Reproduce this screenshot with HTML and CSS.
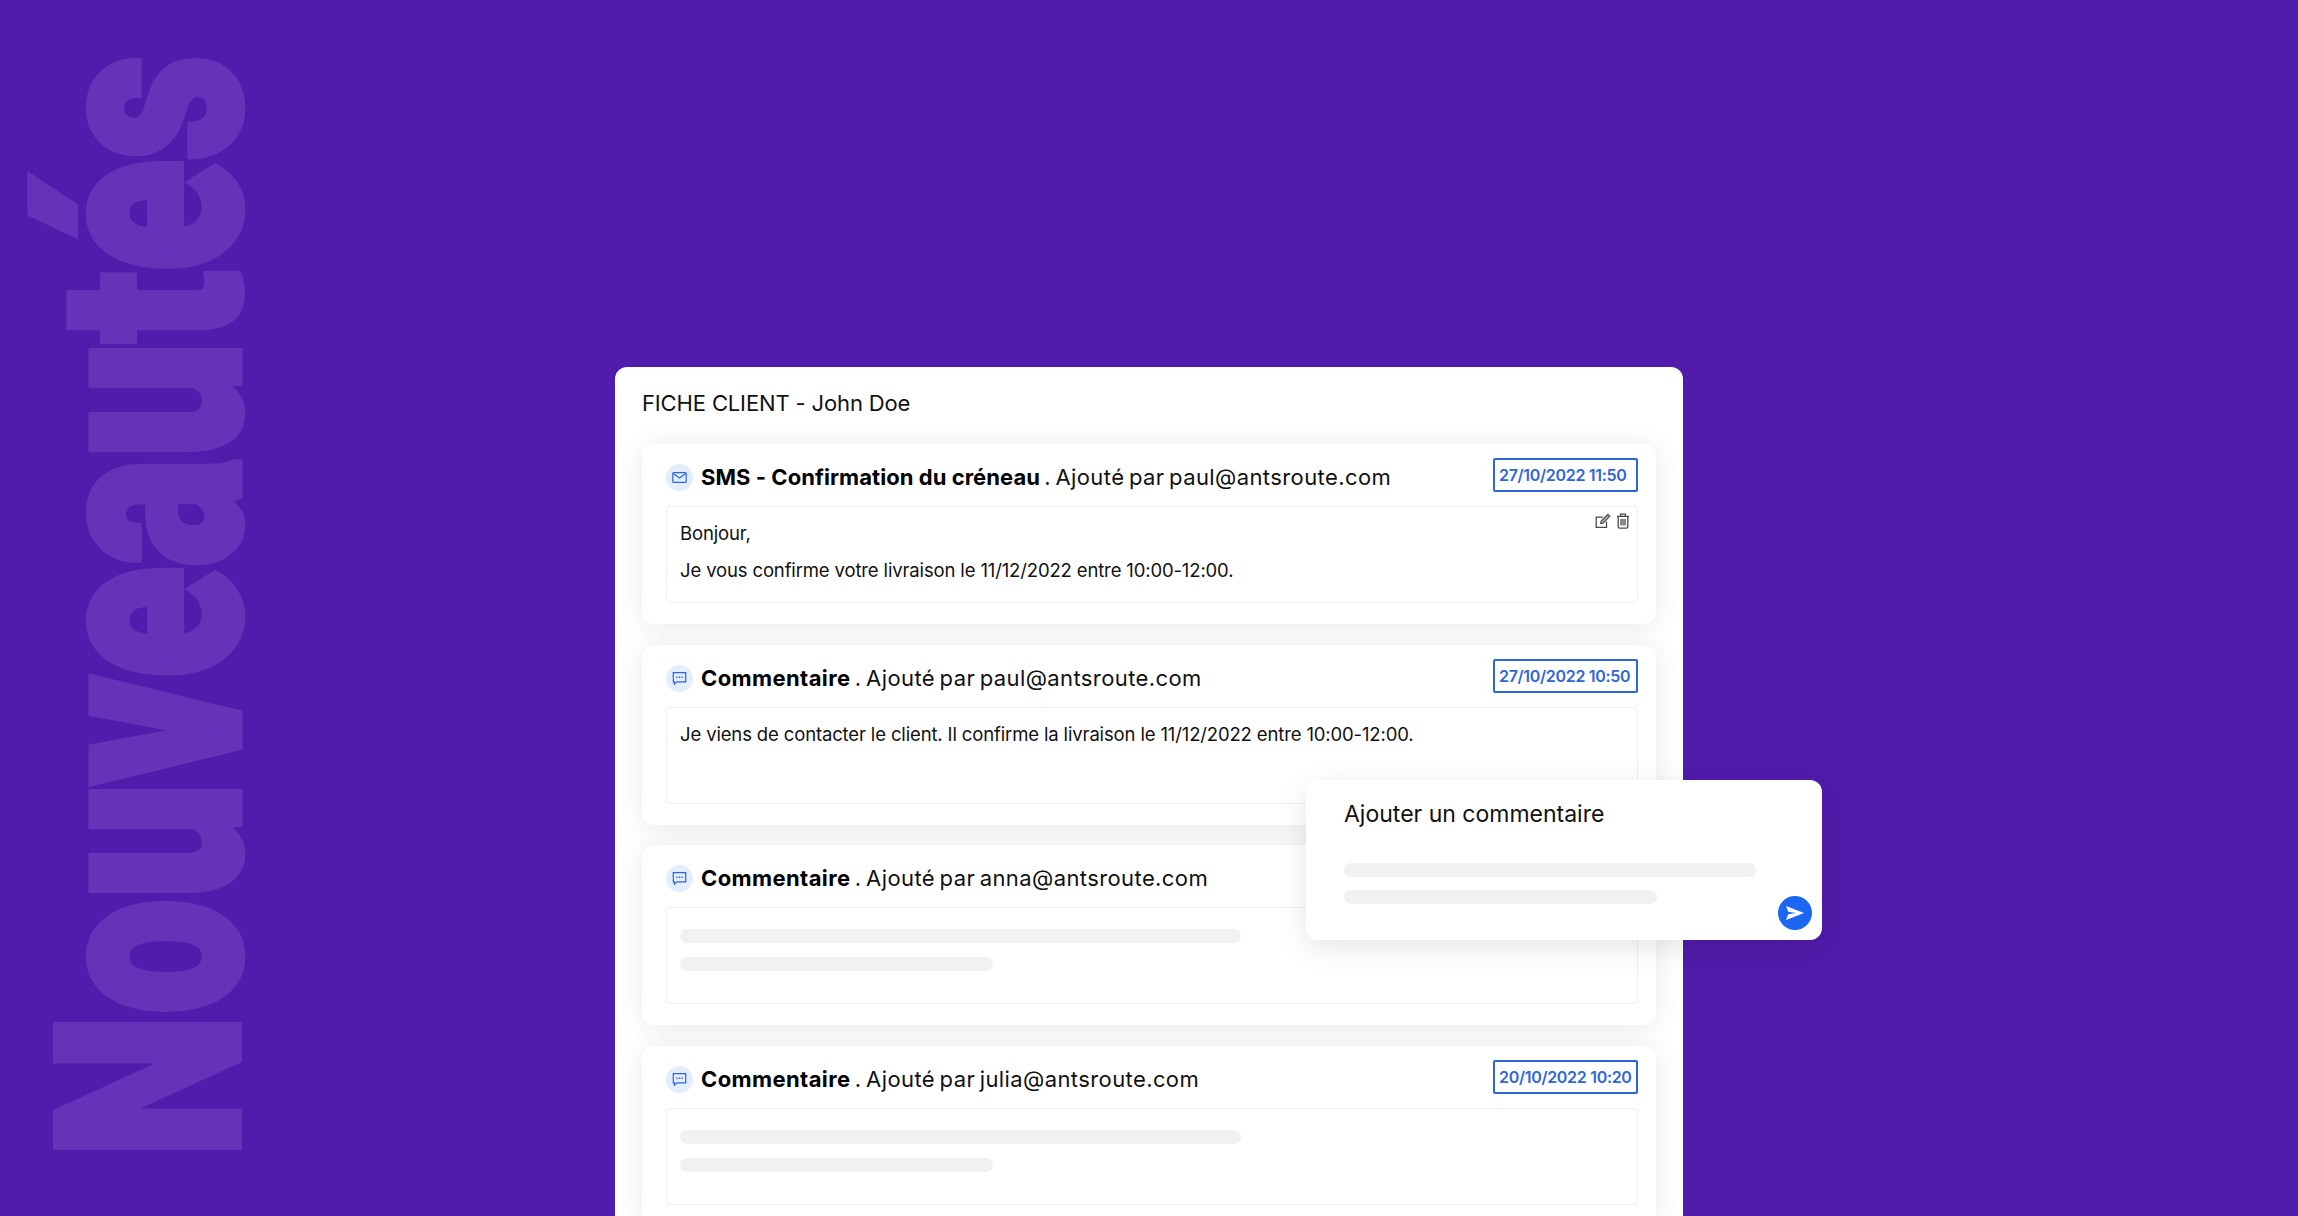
FILE: index.html
```html
<!DOCTYPE html>
<html lang="fr">
<head>
<meta charset="utf-8">
<title>Nouveautés</title>
<link rel="stylesheet" href="styles.css">
</head>
<body>
<div class="stage">
  <div class="watermark">N<span class="wm-low">ouveau</span>t<span class="wm-low">és</span></div>
  <section class="sheet">
    <h1 class="sheet-title">FICHE CLIENT - John Doe</h1>
    <div class="entries">
      <article class="entry">
        <header class="entry-head">
          <div class="lead">
            <span class="badge"><svg width="15" height="13" viewBox="0 0 15 13" fill="none" stroke="#2f66d6" stroke-width="1.2"><rect x=".8" y="1.6" width="13.4" height="9.8" rx="1"/><path d="M1.2 2.4 7.5 7l6.3-4.6"/></svg></span>
            <p class="entry-title"><strong class="b1">SMS - Confirmation du créneau</strong> <span class="by">. Ajouté par paul@antsroute.com</span></p>
          </div>
          <time class="date">27/10/2022 11:50</time>
        </header>
        <div class="box">
          <p class="msg">Bonjour,</p>
          <p class="msg">Je vous confirme votre livraison le 11/12/2022 entre 10:00-12:00.</p>
          <div class="tools">
            <svg width="16" height="16" viewBox="0 0 16 16" fill="none" stroke="#4a4a4a" stroke-width="1.3"><path d="M11.5 8.500V14.400H1.200V4.200H7.800"/><path d="M5.600 10.600 6.200 8 12.900 1.300l2 2L8.200 10z" fill="#4a4a4a" fill-opacity=".45" stroke-width="1.1"/></svg>
            <svg width="14" height="16" viewBox="0 0 14 16" fill="none" stroke="#4a4a4a" stroke-width="1.3"><path d="M1 3.400h12M4.600 3.200V1.200h4.800v2M2.200 3.400v10.400c0 .9.6 1.400 1.400 1.400h6.800c.8 0 1.400-.5 1.400-1.400V3.400M5 6v6.600M7 6v6.600M9 6v6.600"/></svg>
          </div>
        </div>
      </article>
      <article class="entry">
        <header class="entry-head">
          <div class="lead">
            <span class="badge"><svg width="15" height="15" viewBox="0 0 15 15" fill="none"><path d="M1.300 1.600h12.400v9.200H5l-2.600 2.400v-2.400H1.300z" stroke="#2f66d6" stroke-width="1.2"/><path d="M4.200 6.200h1.400M6.800 6.200h1.400M9.400 6.200h1.400" stroke="#2f66d6" stroke-width="1.6"/></svg></span>
            <p class="entry-title"><strong class="b2">Commentaire</strong> <span class="by">. Ajouté par paul@antsroute.com</span></p>
          </div>
          <time class="date">27/10/2022 10:50</time>
        </header>
        <div class="box">
          <p class="msg">Je viens de contacter le client. Il confirme la livraison le 11/12/2022 entre 10:00-12:00.</p>
        </div>
      </article>
      <article class="entry">
        <header class="entry-head">
          <div class="lead">
            <span class="badge"><svg width="15" height="15" viewBox="0 0 15 15" fill="none"><path d="M1.300 1.600h12.400v9.200H5l-2.600 2.400v-2.400H1.300z" stroke="#2f66d6" stroke-width="1.2"/><path d="M4.200 6.200h1.400M6.800 6.200h1.400M9.400 6.200h1.400" stroke="#2f66d6" stroke-width="1.6"/></svg></span>
            <p class="entry-title"><strong class="b2">Commentaire</strong> <span class="by">. Ajouté par anna@antsroute.com</span></p>
          </div>
        </header>
        <div class="box skeletons">
          <div class="bar bar-long"></div>
          <div class="bar bar-short"></div>
        </div>
      </article>
      <article class="entry">
        <header class="entry-head">
          <div class="lead">
            <span class="badge"><svg width="15" height="15" viewBox="0 0 15 15" fill="none"><path d="M1.300 1.600h12.400v9.200H5l-2.600 2.400v-2.400H1.300z" stroke="#2f66d6" stroke-width="1.2"/><path d="M4.200 6.200h1.400M6.800 6.200h1.400M9.400 6.200h1.400" stroke="#2f66d6" stroke-width="1.6"/></svg></span>
            <p class="entry-title"><strong class="b2">Commentaire</strong> <span class="by">. Ajouté par julia@antsroute.com</span></p>
          </div>
          <time class="date">20/10/2022 10:20</time>
        </header>
        <div class="box skeletons">
          <div class="bar bar-long"></div>
          <div class="bar bar-short"></div>
        </div>
      </article>
    </div>
  </section>
  <aside class="composer">
    <h2 class="composer-title">Ajouter un commentaire</h2>
    <div class="bar composer-long"></div>
    <div class="bar composer-short"></div>
    <button class="send" type="button" aria-label="Envoyer"><svg width="18" height="14" viewBox="0 0 18 14"><path d="M0 0 18 7 0 14 2.200 8.300 10 7 2.200 5.700z" fill="#fff"/></svg></button>
  </aside>
</div>
</body>
</html>
```
FILE: styles.css
```css
* { box-sizing: border-box; }
html, body { margin: 0; padding: 0; }
body {
  background: #511bab;
  font-family: Inter, "Noto Sans", sans-serif;
  color: #111;
}
.stage {
  position: relative;
  height: 1216px;
  overflow: hidden;
  padding: 367px 0 0 615px;
}
.watermark {
  position: absolute;
  left: 238px;
  top: 1158px;
  font-family: Roboto, sans-serif;
  font-weight: 900;
  font-size: 255px;
  line-height: 1;
  white-space: nowrap;
  color: #6532b8;
  -webkit-text-stroke: 8px #6532b8;
  transform-origin: 0 0;
  transform: rotate(-90deg) scaleX(.804) translateY(-.842em);
}
.wm-low {
  display: inline-block;
  transform-origin: 0 .842em;
  transform: scaleY(1.08);
}
.sheet {
  width: 1068px;
  height: 1000px;
  background: #fff;
  border-radius: 12px 12px 0 0;
  padding: 0 27px;
}
.sheet-title {
  margin: 0;
  height: 77px;
  padding-top: 22px;
  font-size: 22px;
  line-height: 28px;
  font-weight: 400;
  letter-spacing: -.14px;
}
.entries {
  display: flex;
  flex-direction: column;
  gap: 20.7px;
}
.entry {
  height: 180px;
  background: #fff;
  border-radius: 12px;
  padding: 14px 18px 21px 24px;
  box-shadow: 0 2px 28px rgba(0, 0, 0, .09);
}
.entry-head {
  display: flex;
  justify-content: space-between;
  align-items: flex-start;
  height: 34px;
  margin-bottom: 14px;
}
.lead {
  display: flex;
  align-items: center;
  gap: 8px;
  margin-top: 6px;
}
.badge {
  flex: none;
  display: flex;
  align-items: center;
  justify-content: center;
  width: 27px;
  height: 27px;
  border-radius: 50%;
  background: #e4edfd;
}
.entry-title {
  margin: 0;
  font-size: 22px;
  line-height: 27px;
  white-space: nowrap;
}
.entry-title strong { font-weight: 700; color: #000; }
.b1 { letter-spacing: .05px; }
.b2 { letter-spacing: .4px; }
.by {
  margin-left: -2px;
  font-weight: 400;
  letter-spacing: .4px;
  word-spacing: -2px;
}
.date {
  width: 145px;
  height: 34px;
  border: 2px solid #2f66d6;
  border-radius: 2px;
  padding-left: 4px;
  color: #2f66d6;
  font-size: 16px;
  font-weight: 600;
  letter-spacing: -.3px;
  line-height: 30px;
  white-space: nowrap;
}
.box {
  position: relative;
  height: 97px;
  border: 1px solid #efefef;
  border-radius: 4px;
  padding: 15px 13px 0;
}
.msg {
  margin: 0 0 14px;
  font-size: 18.5px;
  line-height: 23px;
  letter-spacing: -.14px;
}
.tools {
  position: absolute;
  top: 6px;
  right: 7px;
  display: flex;
  gap: 5px;
}
.skeletons { padding-top: 21px; }
.bar {
  height: 14px;
  border-radius: 7px;
  background: #f1f1f1;
}
.bar-long { width: 561px; margin-bottom: 14px; }
.bar-short { width: 313px; }
.composer {
  position: absolute;
  left: 1306px;
  top: 780px;
  width: 516px;
  height: 160px;
  padding: 20px 38px;
  background: #fff;
  border-radius: 12px;
  box-shadow: 0 8px 30px rgba(0, 0, 0, .1);
}
.composer-title {
  margin: 0 0 35px;
  font-size: 23px;
  line-height: 28px;
  font-weight: 400;
}
.composer-long { width: 412px; margin-bottom: 13px; }
.composer-short { width: 313px; }
.send {
  position: absolute;
  right: 10px;
  bottom: 10px;
  display: flex;
  align-items: center;
  justify-content: center;
  width: 34px;
  height: 34px;
  padding: 0;
  border: 0;
  border-radius: 50%;
  background: #1d66f2;
}
```
